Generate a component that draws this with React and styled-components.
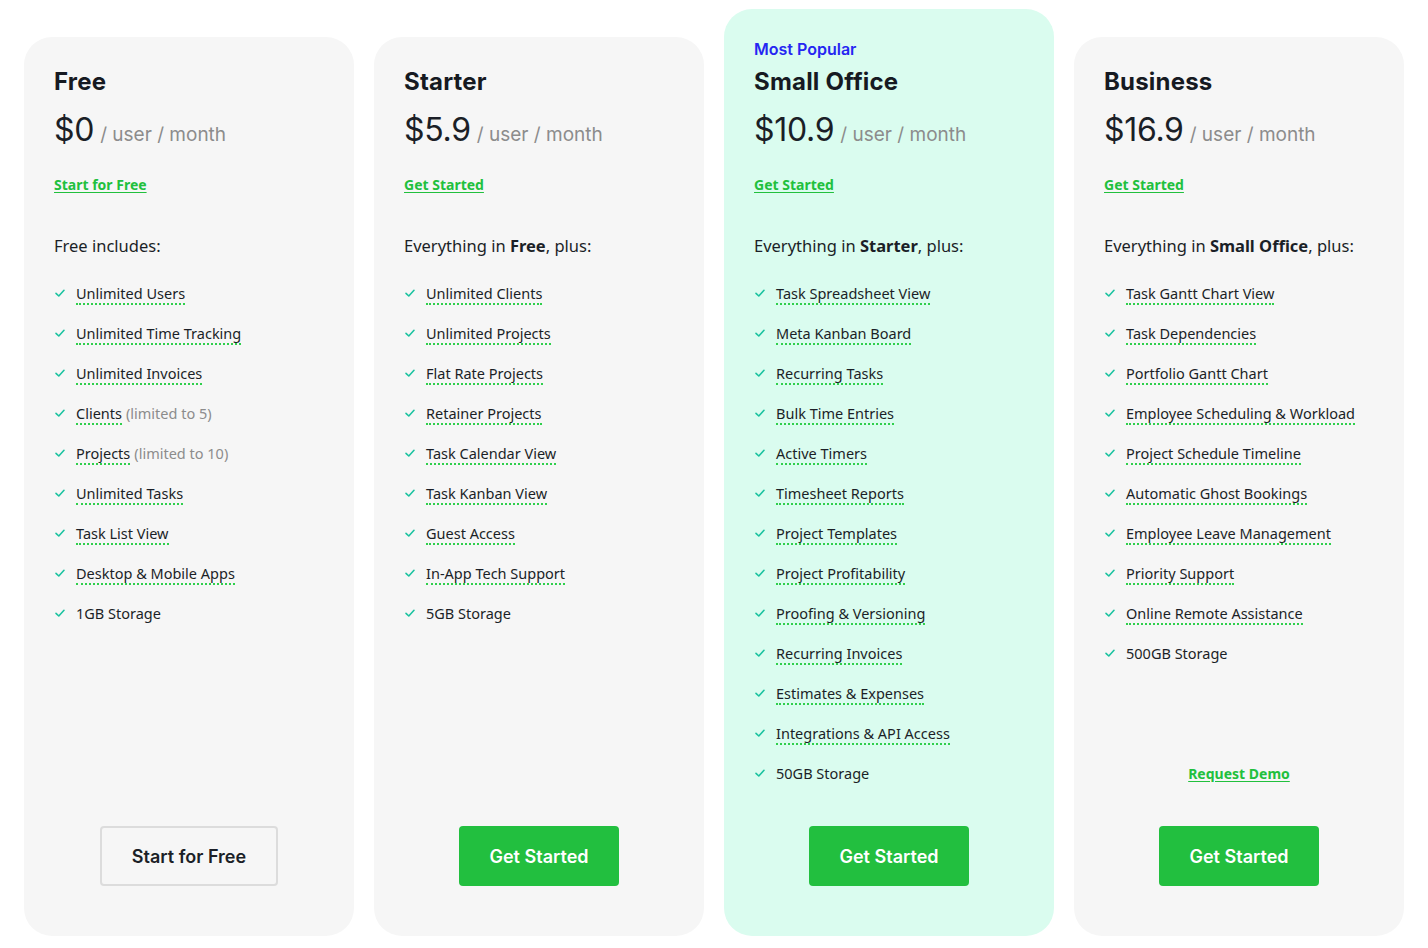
import React from "react";
import styled, { createGlobalStyle } from "styled-components";

const GlobalStyle = createGlobalStyle`
  html, body {
    margin: 0;
    padding: 0;
    background: #ffffff;
  }
  body {
    font-family: "Noto Sans", "Open Sans", sans-serif;
    color: #1b1f27;
  }
`;

const Plans = styled.div`
  display: flex;
  gap: 20px;
  padding: 9px 24px 12px 24px;
  width: 1380px;
  height: 927px;
  box-sizing: content-box;
  align-items: stretch;
`;

const Card = styled.div`
  flex: 0 0 330px;
  box-sizing: border-box;
  display: flex;
  flex-direction: column;
  margin-top: ${(p) => (p.$popular ? "0" : "28px")};
  padding: ${(p) => (p.$popular ? "29px" : "30px")} 30px 50px 30px;
  border-radius: 28px;
  background: ${(p) => (p.$popular ? "#dafcef" : "#f6f6f6")};
`;

const Badge = styled.div`
  font-family: Inter, "Noto Sans", sans-serif;
  font-weight: 600;
  font-size: 16px;
  line-height: 22px;
  color: #2626f2;
  margin-bottom: 7px;
`;

const Title = styled.h2`
  margin: 0;
  font-family: Inter, "Noto Sans", sans-serif;
  font-weight: 700;
  font-size: 24px;
  line-height: 30px;
  color: #161a22;
  letter-spacing: 0.2px;
`;

const PriceRow = styled.div`
  display: flex;
  align-items: baseline;
  gap: 6px;
  margin-top: 14px;
  font-family: Inter, "Noto Sans", sans-serif;
`;

const Amount = styled.span`
  font-size: 32px;
  font-weight: 400;
  line-height: 38px;
  color: #1b1f27;
  letter-spacing: -0.3px;
`;

const Per = styled.span`
  font-size: 19px;
  font-weight: 400;
  color: #8c8c8c;
`;

const TopLink = styled.a`
  align-self: flex-start;
  margin-top: 26px;
  font-weight: 700;
  font-size: 14px;
  line-height: 20px;
  color: #21c03d;
  text-decoration: underline;
  text-underline-offset: 2px;
  cursor: pointer;
`;

const Intro = styled.p`
  margin: 40px 0 0 0;
  font-size: 16.5px;
  line-height: 22px;
  color: #1b1f27;

  b {
    font-weight: 700;
  }
`;

const FeatureList = styled.ul`
  list-style: none;
  margin: 25px 0 0 0;
  padding: 0;
  display: flex;
  flex-direction: column;
  gap: 18px;
`;

const Feature = styled.li`
  display: flex;
  align-items: center;
  gap: 10px;
  height: 22px;
  font-size: 14.5px;
  line-height: 20px;
  color: #1b1f27;
`;

const Check = styled.svg`
  flex: 0 0 12px;
  width: 12px;
  height: 12px;
`;

const Dotted = styled.span`
  border-bottom: 2px dotted #2fcf4c;
`;

const Muted = styled.span`
  color: #8c8c8c;
  margin-left: 4px;
`;

const Footer = styled.div`
  margin-top: auto;
  display: flex;
  flex-direction: column;
  align-items: center;
`;

const DemoLink = styled(TopLink)`
  align-self: center;
  margin: 0 0 42px 0;
`;

const Button = styled.button`
  height: 60px;
  padding: 0 30px;
  border-radius: 4px;
  font-family: Inter, "Noto Sans", sans-serif;
  font-weight: 600;
  font-size: 18px;
  cursor: pointer;
  background: ${(p) => (p.$outline ? "transparent" : "#22bf3f")};
  color: ${(p) => (p.$outline ? "#1b1f27" : "#ffffff")};
  border: ${(p) => (p.$outline ? "2px solid #dcdcdc" : "none")};
  box-sizing: border-box;
`;

const CheckIcon = () => (
  <Check viewBox="0 0 12 12" fill="none">
    <path d="M2 6.3 L4.8 9 L10 3.3" stroke="#1cc3a0" strokeWidth="1.6" strokeLinecap="round" strokeLinejoin="round" />
  </Check>
);

const plans = [
  {
    name: "Free",
    price: "$0",
    link: "Start for Free",
    intro: <>Free includes:</>,
    features: [
      ["Unlimited Users"],
      ["Unlimited Time Tracking"],
      ["Unlimited Invoices"],
      ["Clients", "(limited to 5)"],
      ["Projects", "(limited to 10)"],
      ["Unlimited Tasks"],
      ["Task List View"],
      ["Desktop & Mobile Apps"],
      ["1GB Storage", null, true],
    ],
    button: "Start for Free",
    outline: true,
  },
  {
    name: "Starter",
    price: "$5.9",
    link: "Get Started",
    intro: <>Everything in <b>Free</b>, plus:</>,
    features: [
      ["Unlimited Clients"],
      ["Unlimited Projects"],
      ["Flat Rate Projects"],
      ["Retainer Projects"],
      ["Task Calendar View"],
      ["Task Kanban View"],
      ["Guest Access"],
      ["In-App Tech Support"],
      ["5GB Storage", null, true],
    ],
    button: "Get Started",
  },
  {
    name: "Small Office",
    price: "$10.9",
    link: "Get Started",
    popular: true,
    intro: <>Everything in <b>Starter</b>, plus:</>,
    features: [
      ["Task Spreadsheet View"],
      ["Meta Kanban Board"],
      ["Recurring Tasks"],
      ["Bulk Time Entries"],
      ["Active Timers"],
      ["Timesheet Reports"],
      ["Project Templates"],
      ["Project Profitability"],
      ["Proofing & Versioning"],
      ["Recurring Invoices"],
      ["Estimates & Expenses"],
      ["Integrations & API Access"],
      ["50GB Storage", null, true],
    ],
    button: "Get Started",
  },
  {
    name: "Business",
    price: "$16.9",
    link: "Get Started",
    intro: <>Everything in <b>Small Office</b>, plus:</>,
    features: [
      ["Task Gantt Chart View"],
      ["Task Dependencies"],
      ["Portfolio Gantt Chart"],
      ["Employee Scheduling & Workload"],
      ["Project Schedule Timeline"],
      ["Automatic Ghost Bookings"],
      ["Employee Leave Management"],
      ["Priority Support"],
      ["Online Remote Assistance"],
      ["500GB Storage", null, true],
    ],
    demo: true,
    button: "Get Started",
  },
];

export default function App() {
  return (
    <>
      <GlobalStyle />
      <Plans>
        {plans.map((plan) => (
          <Card key={plan.name} $popular={plan.popular}>
            {plan.popular && <Badge>Most Popular</Badge>}
            <Title>{plan.name}</Title>
            <PriceRow>
              <Amount>{plan.price}</Amount>
              <Per>/ user / month</Per>
            </PriceRow>
            <TopLink>{plan.link}</TopLink>
            <Intro>{plan.intro}</Intro>
            <FeatureList>
              {plan.features.map(([label, note, plain]) => (
                <Feature key={label}>
                  <CheckIcon />
                  <span>
                    {plain ? label : <Dotted>{label}</Dotted>}
                    {note && <Muted>{note}</Muted>}
                  </span>
                </Feature>
              ))}
            </FeatureList>
            <Footer>
              {plan.demo && <DemoLink>Request Demo</DemoLink>}
              <Button $outline={plan.outline}>{plan.button}</Button>
            </Footer>
          </Card>
        ))}
      </Plans>
    </>
  );
}
